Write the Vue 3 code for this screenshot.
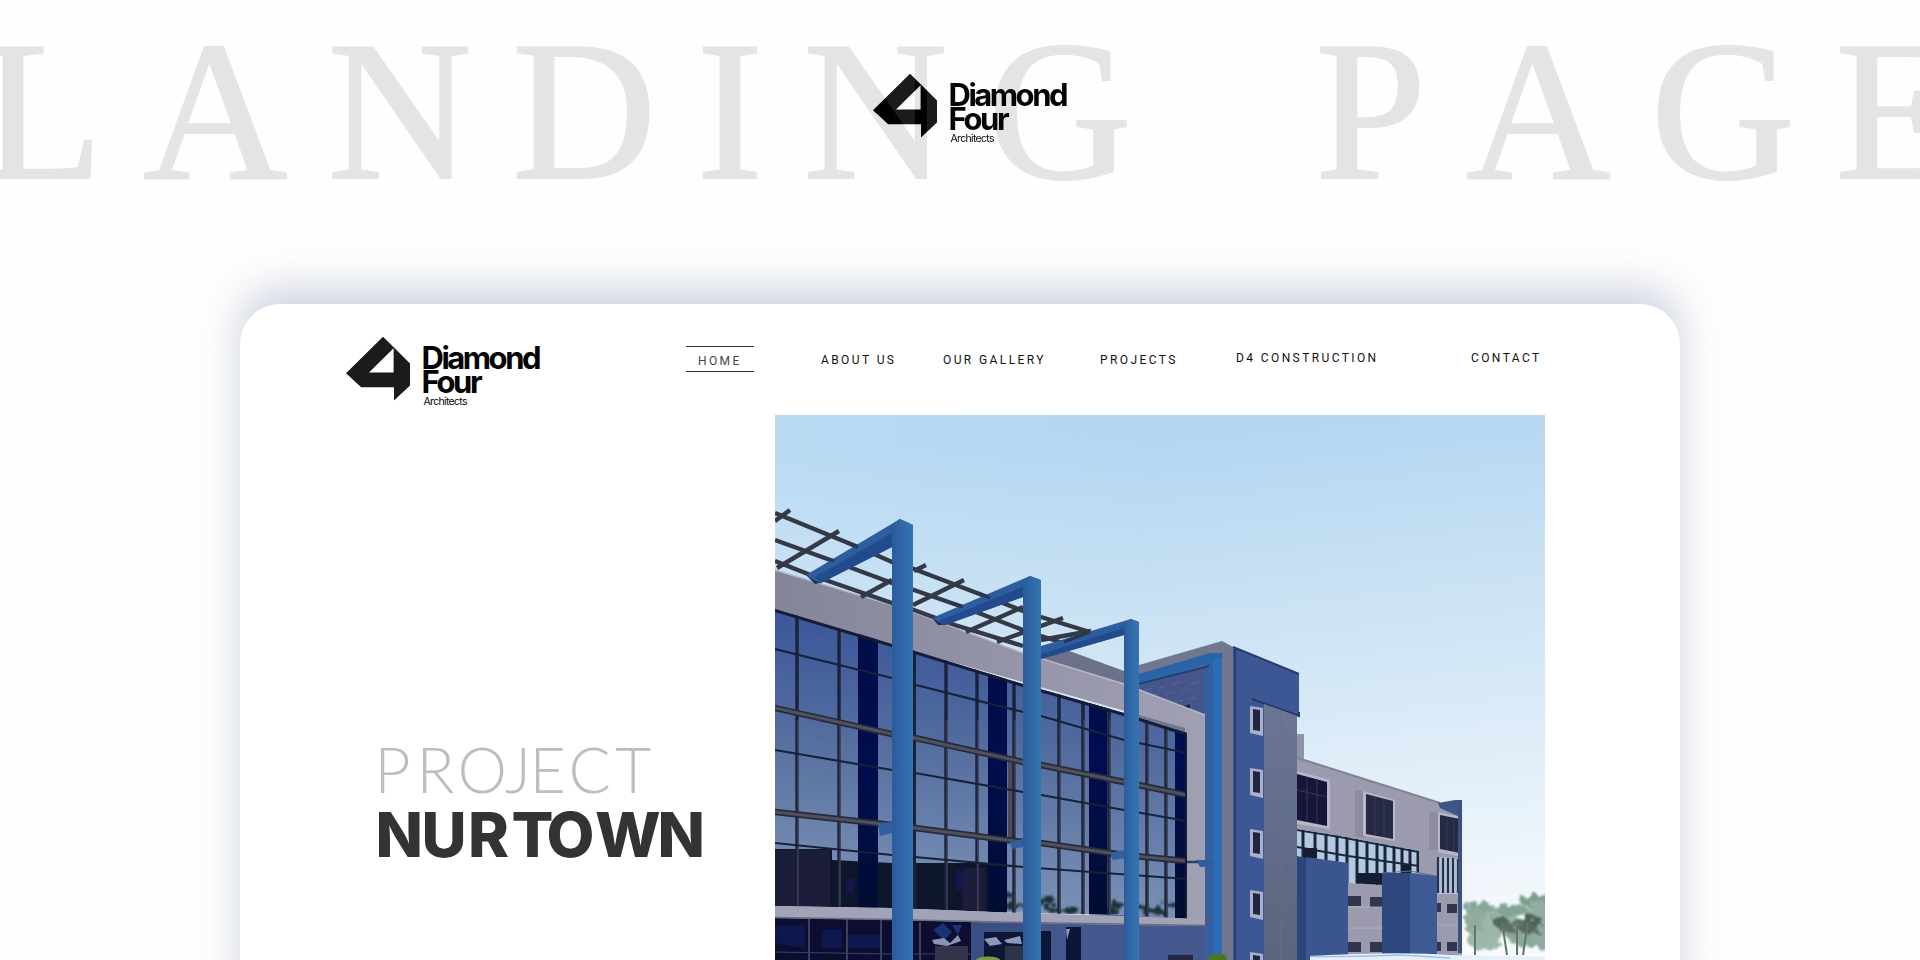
<script setup>
const markPath =
  'M43 6.8 54 17.5 70 33.4V55.4L54 70.4V57.2H21.2L6 43.2ZM53.6 18.2 29 42.6H53.6Z'

const nav = [
  { label: 'HOME', mod: 'active' },
  { label: 'ABOUT US', mod: '' },
  { label: 'OUR GALLERY', mod: '' },
  { label: 'PROJECTS', mod: '' },
  { label: 'D4 CONSTRUCTION', mod: 'raised' },
  { label: 'CONTACT', mod: 'raised' },
]

const mullions = [797, 839, 946, 977, 1014, 1059, 1083, 1109, 1147, 1166]
const thinRails = [
  'M775 649 892 678 916 685 1023 712 1041 716 1124 740 1187 753',
  'M775 750 892 770 915 773 1023 792 1041 795 1124 810 1187 821',
  'M775 843 892 855 915 857 1023 867 1187 879',
]
const thickRails = [
  'M775 708 892 734 915 738 1023 762 1041 765 1124 782 1187 795',
  'M775 812 892 825 915 828 1023 842 1041 843 1124 855 1187 861',
]
const darkBays = [
  [858, 20],
  [988, 19],
  [1089, 18],
  [1175, 12],
]
const towerWindows = [706, 768, 829, 890, 952]
const stripBars = [1303, 1315, 1326, 1337, 1347, 1357, 1367, 1377, 1385, 1394, 1402, 1410, 1418]
const smallWindows = [
  [1347, 896, 14, 10],
  [1370, 897, 13, 10],
  [1347, 942, 14, 10],
  [1370, 942, 13, 10],
  [1437, 903, 4, 9],
  [1447, 904, 10, 9],
  [1437, 942, 4, 9],
  [1447, 942, 10, 9],
]
const reflections = [
  [1008, 896, 8],
  [1014, 905, 10],
  [1047, 901, 10],
  [1053, 909, 9],
  [1072, 911, 9],
  [1117, 905, 8],
  [1112, 912, 8],
  [1144, 909, 7],
  [1156, 911, 9],
  [1171, 905, 7],
]
const trees = [
  [1475, 904, 15, 6, '#86a696'],
  [1472, 918, 13, 13, '#91ab9f'],
  [1496, 918, 18, 15, '#9cb7ac'],
  [1508, 906, 16, 6, '#82a396'],
  [1532, 897, 16, 7, '#7a9d8c'],
  [1536, 913, 14, 16, '#91aea3'],
  [1520, 929, 18, 14, '#8aa79b'],
  [1480, 936, 17, 10, '#9db8a9'],
  [1540, 935, 9, 12, '#8eaba0'],
  [1497, 918, 9, 5, '#53685a'],
  [1503, 924, 9, 5, '#5b7063'],
  [1517, 920, 8, 5, '#5f7569'],
  [1530, 917, 10, 5, '#4d6355'],
  [1526, 925, 11, 5, '#566b5c'],
]
</script>

<template>
  <main class="page">
    <section class="hero">
      <svg class="hero-mark" width="80" height="80" viewBox="0 0 80 80">
        <path :d="markPath" fill="#1b1b1b" fill-rule="evenodd" />
      </svg>
      <h1 class="headline">LANDING PAGE</h1>
      <svg class="hero-word" width="220" height="90" viewBox="0 0 220 90">
        <g class="word">
          <text x="81.5" y="38.5" font-size="31" font-weight="700" textLength="120">Diamond</text>
          <text x="81.5" y="63" font-size="31" font-weight="700" textLength="61">Four</text>
          <text class="sub" x="83.5" y="74.5" font-size="10.5" textLength="44">Architects</text>
        </g>
      </svg>
    </section>

    <section class="card">
      <header class="top">
        <svg class="brand" width="220" height="90" viewBox="0 0 220 90">
          <path :d="markPath" fill="#1b1b1b" fill-rule="evenodd" />
          <g class="word">
            <text x="81.5" y="38.5" font-size="31" font-weight="700" textLength="120">Diamond</text>
            <text x="81.5" y="63" font-size="31" font-weight="700" textLength="61">Four</text>
            <text class="sub" x="83.5" y="74.5" font-size="10.5" textLength="44">Architects</text>
          </g>
        </svg>
        <nav class="nav">
          <a v-for="n in nav" :key="n.label" class="link" :class="n.mod">{{ n.label }}</a>
        </nav>
      </header>

      <div class="body">
        <h2 class="title">
          <svg width="340" height="130" viewBox="370 735 340 130">
            <text class="light" y="793" x="374.5 416.5 457.5 505 529.5 568.5 615">PROJECT</text>
            <text class="bold" y="857" x="375.5 421.5 468 511.5 546.5 595 657.5">NURTOWN</text>
          </svg>
        </h2>

        <svg class="photo" width="770" height="545" viewBox="775 415 770 545">
          <defs>
            <linearGradient id="sky" x1="0.55" y1="0" x2="0.7" y2="1">
              <stop offset="0" stop-color="#b2d5f1" />
              <stop offset="0.35" stop-color="#cae2f4" />
              <stop offset="0.65" stop-color="#dfedf8" />
              <stop offset="1" stop-color="#f8fafd" />
            </linearGradient>
            <linearGradient id="haze" x1="0" y1="0" x2="1" y2="0">
              <stop offset="0" stop-color="#e2f2fb" stop-opacity="0.4" />
              <stop offset="0.5" stop-color="#e2f2fb" stop-opacity="0" />
            </linearGradient>
            <linearGradient id="glass" gradientUnits="userSpaceOnUse" x1="900" y1="610" x2="870" y2="920">
              <stop offset="0" stop-color="#37549a" />
              <stop offset="0.45" stop-color="#566f9f" />
              <stop offset="1" stop-color="#8197bb" />
            </linearGradient>
            <linearGradient id="bay" x1="0" y1="0" x2="0" y2="1">
              <stop offset="0" stop-color="#020a44" />
              <stop offset="0.5" stop-color="#050d50" />
              <stop offset="1" stop-color="#050a30" />
            </linearGradient>
            <linearGradient id="post" x1="0" y1="0" x2="1" y2="0">
              <stop offset="0" stop-color="#2b5c9c" />
              <stop offset="0.5" stop-color="#2f69a9" />
              <stop offset="1" stop-color="#3474b2" />
            </linearGradient>
            <linearGradient id="parapet" gradientUnits="userSpaceOnUse" x1="775" y1="0" x2="1205" y2="0">
              <stop offset="0" stop-color="#85859a" />
              <stop offset="1" stop-color="#a1a0b3" />
            </linearGradient>
            <linearGradient id="panel" x1="0" y1="0" x2="0" y2="1">
              <stop offset="0" stop-color="#6b7594" />
              <stop offset="1" stop-color="#5a657e" />
            </linearGradient>
            <clipPath id="glassClip">
              <path d="M775 609 892 644 915 651 1023 684 1124 713 1187 733V919L1125 915 1024 913 892 908 775 906Z" />
            </clipPath>
            <clipPath id="stripClip">
              <path d="M1297 829 1340 836 1419 851V873H1385V885L1348 883V863L1297 857Z" />
            </clipPath>
            <filter id="soft" x="-5%" y="-5%" width="110%" height="110%">
              <feGaussianBlur stdDeviation="0.75" />
            </filter>
            <filter id="leaf" x="-20%" y="-20%" width="140%" height="140%">
              <feTurbulence type="fractalNoise" baseFrequency="0.16" numOctaves="2" seed="4" />
              <feDisplacementMap in="SourceGraphic" scale="13" />
              <feGaussianBlur stdDeviation="0.8" />
            </filter>
          </defs>

          <rect x="775" y="415" width="770" height="545" fill="url(#sky)" />
          <rect x="775" y="415" width="770" height="545" fill="url(#haze)" opacity="0.5" />

          <g filter="url(#leaf)">
            <ellipse v-for="(t, i) in trees" :key="i" :cx="t[0] + 4" :cy="t[1] + 4" :rx="t[2]" :ry="t[3]" :fill="t[4]" />
          </g>
          <path d="M1502 922 1507 955M1517 922V955M1528 922 1523 955M1475 925V955" stroke="#65766b" stroke-width="2" />

          <g filter="url(#soft)">
            <!-- rear wing -->
            <path d="M1297 734H1304V762H1297Z" fill="#8d94a8" />
            <path d="M1297 758 1304 760 1440 803 1462 808V957H1297Z" fill="#9b9bad" />
            <path d="M1297 758 1304 760 1440 803" stroke="#7f8398" stroke-width="2" fill="none" />
            <path d="M1438 803 1455 800H1462V818L1440 808Z" fill="#3f5788" />
            <path d="M1355 790 1366 792V838L1355 836ZM1429 812 1439 813V850L1429 850Z" fill="#8e8d9f" />
            <path d="M1297 771 1330 780V829L1297 824ZM1363 791 1395 800V841L1363 836ZM1438 812 1462 817V857L1438 852Z" fill="#b6b7c8" />
            <path d="M1297 774 1327 782V826L1297 820Z" fill="#17193a" />
            <path d="M1366 794 1393 801V839L1366 834ZM1440 815 1460 819V853L1440 849Z" fill="#272a45" />
            <path d="M1307 777V822M1317 779V824M1375 797V835M1384 799V837M1447 817V850M1454 818V851M1297 790 1327 797" stroke="#343753" stroke-width="1" />
            <path d="M1297 829 1340 836 1419 851V873H1385V885L1348 883V863L1297 857Z" fill="#b4c8e0" />
            <g clip-path="url(#stripClip)">
              <path v-for="x in stripBars" :key="x" :d="`M${x} 820V890`" stroke="#18253a" stroke-width="3" />
              <path d="M1297 830 1340 837 1419 852M1297 847 1348 856 1419 866" stroke="#18253a" stroke-width="2" fill="none" />
              <path d="M1304 848H1317V858H1304ZM1357 873H1385V886H1357ZM1402 865H1411V876H1402Z" fill="#161c30" />
            </g>
            <path d="M1437 857 1460 859V894H1437Z" fill="#b4c2d6" />
            <path d="M1438 857V893M1443 858V893M1448 858V893M1453 858V893M1458 859V893" stroke="#27334d" stroke-width="2.2" />
            <rect v-for="(w, i) in smallWindows" :key="i" :x="w[0]" :y="w[1]" :width="w[2]" :height="w[3]" fill="#303650" />
            <path d="M1347 907H1382M1347 928H1382M1437 925H1460" stroke="#b1b5c4" stroke-width="0.8" />
            <path d="M1297 856 1306 858V960H1297Z" fill="#2b4577" />
            <path d="M1306 857 1348 863V960H1306Z" fill="#3a5590" />
            <path d="M1382 873H1410V957H1382Z" fill="#2e467d" />
            <path d="M1410 873 1437 876V957H1410Z" fill="#3d5a94" />
            <path d="M1382 873 1410 871 1437 876" stroke="#5a70a0" stroke-width="1" fill="none" />
            <path d="M1460 801V953" stroke="#3b5182" stroke-width="4" />
            <path d="M1310 960V956Q1400 951 1450 955L1545 957V960Z" fill="#e6f0fb" />
            <path d="M1310 956.5Q1350 957 1400 955L1450 958" stroke="#9fc0ea" stroke-width="1.4" fill="none" />

            <!-- stair tower -->
            <path d="M1060 648 1075 653 1124 671 1124 690 1020 656Z" fill="#6c7189" />
            <path d="M1139 665 1222 641 1233 647V960H1139Z" fill="#727790" />
            <path d="M1139 674 1210 653H1222V960H1205V665L1139 686Z" fill="#2b64a8" />
            <path d="M1139 686 1209 665V716L1139 697Z" fill="#46568a" />
            <path d="M1139 684 1209 666" stroke="#23406f" stroke-width="2" />
            <path d="M1145 690l7-2M1158 688l8-2M1172 684l9-2M1150 696l8-2M1165 694l9-2M1181 691l9-2M1174 702l9-2M1188 699l8-1M1190 684l9-2" stroke="#536294" stroke-width="1.5" />
            <path d="M1184 706 1190 704V711" fill="#16264b" />
            <path d="M1204 670H1213V960H1204Z" fill="#365f9f" />
            <path d="M1213 658H1222V960H1213Z" fill="#2b6db4" />
            <path d="M1233 647 1299 674V716L1264 704V960H1233Z" fill="#3d5794" />
            <path d="M1233 647 1299 674" stroke="#2b3c6c" stroke-width="2" />
            <path d="M1235 648V960" stroke="#2b4279" stroke-width="2.5" />
            <path d="M1252 699 1299 716V712" stroke="#263864" stroke-width="2" fill="none" />
            <path d="M1264 704 1297 716V960H1264Z" fill="url(#panel)" />
            <path d="M1264 737 1297 745M1264 768 1297 774M1264 800 1297 804M1264 831 1297 833M1264 862H1297M1264 892H1297M1264 922H1297M1281 711V960" stroke="#66718c" stroke-width="0.8" />
            <g v-for="y in towerWindows" :key="y">
              <path :d="`M1250 ${y} l13 2 v28 l-13 -3Z`" fill="#a9b0c9" />
              <path :d="`M1253 ${y + 3} l7 1 v21 l-7 -1Z`" fill="#20263f" />
            </g>

            <!-- ground floor -->
            <path d="M775 915H1212V960H775Z" fill="#45598d" />
            <path d="M1205 924H1213V960H1205Z" fill="#365f9f" />
            <path d="M775 915H971V960H775Z" fill="#0b1031" />
            <path d="M775 925H805V948L775 943ZM822 930H842V948H822ZM848 935H880V948H848Z" fill="#101e6a" opacity="0.5" />
            <path d="M809 919V960M847 919V960M881 920V960M920 922V960" stroke="#5c6480" stroke-width="1.2" />
            <path d="M775 952 892 954M914 954H971" stroke="#3b4468" stroke-width="1" />
            <path d="M933 930 943 923 952 932 944 940ZM952 925H962L958 935Z" fill="#1f3076" />
            <path d="M932 940 944 938 950 943 958 935 961 941 947 946 934 944Z" fill="#8a93b2" />
            <path d="M935 946H968V960H935Z" fill="#333647" />
            <path d="M971 923H1023V960H971Z" fill="#3a5084" />
            <path d="M984 932H1023V960H984ZM1041 931H1051V960H1041ZM1066 927H1081V960H1066Z" fill="#0e1434" />
            <path d="M984 939 996 937 1002 944 990 946ZM1004 940 1020 936 1022 944 1007 943ZM1066 929H1070L1067 940Z" fill="#8c99bb" />
            <path d="M1005 946H1023V960H1005Z" fill="#2e3347" />
            <path d="M1168 955H1193V960H1168Z" fill="#202840" />

            <!-- glazed facade -->
            <path d="M775 570 892 605 913 612 1023 653 1124 684 1205 715V925H1185V728L775 612Z" fill="url(#parapet)" />
            <path d="M775 570 892 605 913 612 1023 653 1124 684 1205 715" stroke="#b4b8ca" stroke-width="1.4" fill="none" />
            <g clip-path="url(#glassClip)">
              <rect x="775" y="600" width="415" height="325" fill="url(#glass)" />
              <path d="M775 849H832V860L892 863V910H775ZM914 863H1006V915H914Z" fill="#101229" />
              <path d="M775 850H795V906H775ZM799 850H830V906H799ZM963 868H985V910H963Z" fill="#1d1c3b" />
              <path d="M956 870H963V890H956ZM846 878H854V893H846ZM988 866H1003V885H988Z" fill="#161d68" opacity="0.6" />
              <g filter="url(#leaf)">
                <ellipse v-for="(r, i) in reflections" :key="i" :cx="r[0]" :cy="r[1]" :rx="r[2]" ry="3.6" fill="#1c3038" />
              </g>
              <rect v-for="b in darkBays" :key="b[0]" :x="b[0]" y="600" :width="b[1]" height="325" fill="url(#bay)" />
              <path d="M1008 758H1014V840H1008Z" fill="#4c4b59" />
              <path v-for="x in mullions" :key="x" :d="`M${x} 600V925`" stroke="#1a2138" stroke-width="3.4" />
              <path v-for="x in mullions" :key="'l' + x" :d="`M${x + 1} 720V925`" stroke="#55586b" stroke-width="0.9" />
              <path d="M914 640V925" stroke="#1a2138" stroke-width="4" />
              <path v-for="d in thinRails" :key="d" :d="d" stroke="#192039" stroke-width="2.2" fill="none" />
              <path v-for="d in thickRails" :key="d" :d="d" stroke="#272a3a" stroke-width="6.4" fill="none" />
              <path v-for="d in thickRails" :key="'h' + d" :d="d" stroke="#50515e" stroke-width="3" fill="none" />
              <path d="M775 610 892 645 915 652 1023 685 1124 714 1187 734V919" stroke="#161d34" stroke-width="4" fill="none" />
            </g>
            <path d="M775 906 892 908 1024 913 1125 916 1205 919V926L1124 925 1023 923 892 920 775 918Z" fill="#a3a3b8" />
            <path d="M775 917.5 892 919.5 1023 922.5 1205 925.5" stroke="#6a6c84" stroke-width="1.6" fill="none" />
            <path d="M1187 862H1205" stroke="#33405f" stroke-width="2.5" />
            <path d="M1196 860H1213V867H1200Z" fill="#315c9e" />

            <!-- pergola -->
            <g stroke="#353844" stroke-width="4.4" fill="none">
              <path d="M775 513 858 547 892 562 914 569 990 598 1023 611 1041 617 1090 632" />
              <path d="M775 540 833 561 892 583 914 590 963 607 1023 630 1041 636 1063 643" />
              <path d="M775 561 808 574 892 603 914 610 955 625 1023 646" />
              <path d="M775 521 790 510M777 568 839 531M861 597 892 580M914 571 926 565M913 605 964 580M966 632 1023 607M997 642 1063 618M1041 640 1091 631" />
            </g>
            <g fill="#2d5d9f">
              <path d="M900 519 913 525 892 547 821 583 806 575Z" />
              <path d="M1030 576 1041 580 1023 597 945 625 932 618Z" />
              <path d="M1131 619 1139 622 1124 635 1041 659V646Z" />
            </g>
            <path d="M892 533 892 547 821 583 815 577ZM1023 587V597L945 625 939 621ZM1124 628V635L1041 659V654Z" fill="#224b8e" />
            <path d="M806 575 821 583 815 584ZM932 618 945 625 938 625Z" fill="#1c3663" />
            <path d="M878 823 892 822V833L880 836ZM1010 842 1023 839V847L1012 849ZM1110 853 1124 850V858L1113 860Z" fill="#315d9f" />
            <path d="M892 524 900 519 913 525V960H892Z" fill="url(#post)" />
            <path d="M1023 580 1030 576 1041 580V960H1023Z" fill="url(#post)" />
            <path d="M1124 622 1131 619 1139 622V960H1124Z" fill="url(#post)" />
            <path d="M845 542 858 547M822 557 834 561M978 593 990 598M951 603 963 607M1064 642 1090 632" stroke="#2c3850" stroke-width="3.4" />

            <ellipse cx="988" cy="960" rx="12" ry="3.5" fill="#7b9a45" />
            <path d="M1207 960Q1209 953 1217 954 1226 952 1227 960Z" fill="#4e7325" />
          </g>
        </svg>
      </div>
    </section>
  </main>
</template>

<style>
html,
body {
  margin: 0;
  overflow: hidden;
  background: #fefefe;
}
</style>

<style scoped>
.page {
  width: 1920px;
  height: 960px;
  overflow: hidden;
  background: #fefefe;
  display: flex;
  flex-direction: column;
}
.hero {
  position: relative;
  isolation: isolate;
  background: #fefefe;
  height: 304px;
  flex: none;
}
.hero-mark,
.hero-word {
  position: absolute;
  left: 867px;
  top: 67px;
}
.hero-word {
  z-index: 2;
}
.headline {
  position: absolute;
  left: -19px;
  top: -1px;
  margin: 0;
  font: 400 200px/224px 'Liberation Serif', serif;
  font-kerning: none;
  letter-spacing: 40px;
  word-spacing: 53px;
  white-space: nowrap;
  color: #1a1a1a;
  -webkit-text-stroke: 2px #1a1a1a;
  mix-blend-mode: difference;
}
.word {
  font-family: Inter, 'Liberation Sans', sans-serif;
  fill: #050505;
}
.sub {
  font-weight: 400;
}
.card {
  position: relative;
  width: 1440px;
  height: 700px;
  flex: none;
  margin: 0 auto;
  border-radius: 40px 40px 0 0;
  background: #fff;
  box-shadow: 0 -16px 40px rgba(65, 82, 140, 0.25);
}
.top {
  display: flex;
  height: 111px;
}
.brand {
  flex: none;
  margin: 26px 0 0 100px;
}
.nav {
  display: grid;
  grid-template-columns: 135px 122px 157px 136px 235px 90px;
  align-items: start;
  justify-items: start;
  margin: 42px 0 0 126px;
}
.link {
  font: 400 12px/14px Roboto, sans-serif;
  letter-spacing: 2.4px;
  color: #111;
  margin-top: 7px;
  white-space: nowrap;
}
.link.raised {
  margin-top: 5px;
}
.link.active {
  box-sizing: border-box;
  width: 68px;
  height: 26px;
  margin-top: 0;
  padding: 7px 0 0 12px;
  border: solid #333;
  border-width: 1px 0;
  color: #444;
}
.body {
  display: flex;
  align-items: flex-start;
}
.title {
  margin: 320px 65px 0 130px;
  line-height: 0;
}
.title svg {
  display: block;
}
.light {
  font: 300 62.5px Lato, sans-serif;
  fill: #bdbdbd;
}
.bold {
  font: 800 62px Inter, sans-serif;
  fill: #333;
}
.photo {
  flex: none;
}
</style>
